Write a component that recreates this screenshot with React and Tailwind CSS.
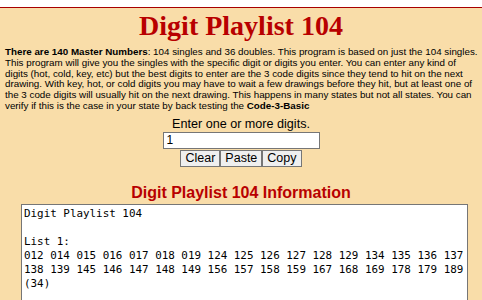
export default function App() {
  const list1 =
    "012 014 015 016 017 018 019 124 125 126 127 128 129 134 135 136 137";
  const list2 =
    "138 139 145 146 147 148 149 156 157 158 159 167 168 169 178 179 189";
  const text = `Digit Playlist 104\n\nList 1:\n${list1}\n${list2}\n(34)`;
  return (
    <div className="w-[482px] h-[300px] overflow-hidden bg-white pt-[7px]" style={{ fontFamily: '"Liberation Sans", Arial, sans-serif' }}>
      <div className="border-t border-[#a80000] bg-[#f9dda9] h-[400px]">
        <h1 className="text-center font-bold text-[#b80000] text-[28px] leading-[32px] pt-[2px]" style={{ fontFamily: '"Liberation Serif", "Times New Roman", serif' }}>
          Digit Playlist 104
        </h1>
        <p className="px-[5px] pt-[5px] text-[9.8px] leading-[10.8px] text-black whitespace-nowrap">
          <b>There are 140 Master Numbers</b>: 104 singles and 36 doubles. This program is based on just the 104 singles.<br />
          This program will give you the singles with the specific digit or digits you enter. You can enter any kind of<br />
          digits (hot, cold, key, etc) but the best digits to enter are the 3 code digits since they tend to hit on the next<br />
          drawing. With key, hot, or cold digits you may have to wait a few drawings before they hit, but at least one of<br />
          the 3 code digits will usually hit on the next drawing. This happens in many states but not all states. You can<br />
          verify if this is the case in your state by back testing the <b>Code-3-Basic</b>
        </p>
        <div className="flex flex-col items-center mt-[5px]">
          <div className="text-[12.6px] leading-[15px] text-black">Enter one or more digits.</div>
          <input
            readOnly
            value="1"
            className="w-[157px] h-[17px] border border-[#767676] bg-white px-[3px] text-[12px] text-black outline-none"
          />
          <div className="flex mt-[1px]">
            <button className="h-[17px] px-[4px] border border-[#767676] bg-[#efefef] text-[12.5px] leading-[15px] text-black">Clear</button>
            <button className="h-[17px] px-[4px] border border-[#767676] bg-[#efefef] text-[12.5px] leading-[15px] text-black">Paste</button>
            <button className="h-[17px] px-[4px] border border-[#767676] bg-[#efefef] text-[12.5px] leading-[15px] text-black">Copy</button>
          </div>
        </div>
        <h2 className="text-center font-bold text-[#b80000] text-[16px] leading-[18px] mt-[17px]">
          Digit Playlist 104 Information
        </h2>
        <div className="mt-[2px] ml-[21px] w-[447px] h-[200px] border border-[#767676] bg-white px-[2px] py-[2px]">
          <pre className="text-[10.9px] leading-[14px] text-black" style={{ fontFamily: '"DejaVu Sans Mono", "Liberation Mono", monospace' }}>{text}</pre>
        </div>
      </div>
    </div>
  );
}
